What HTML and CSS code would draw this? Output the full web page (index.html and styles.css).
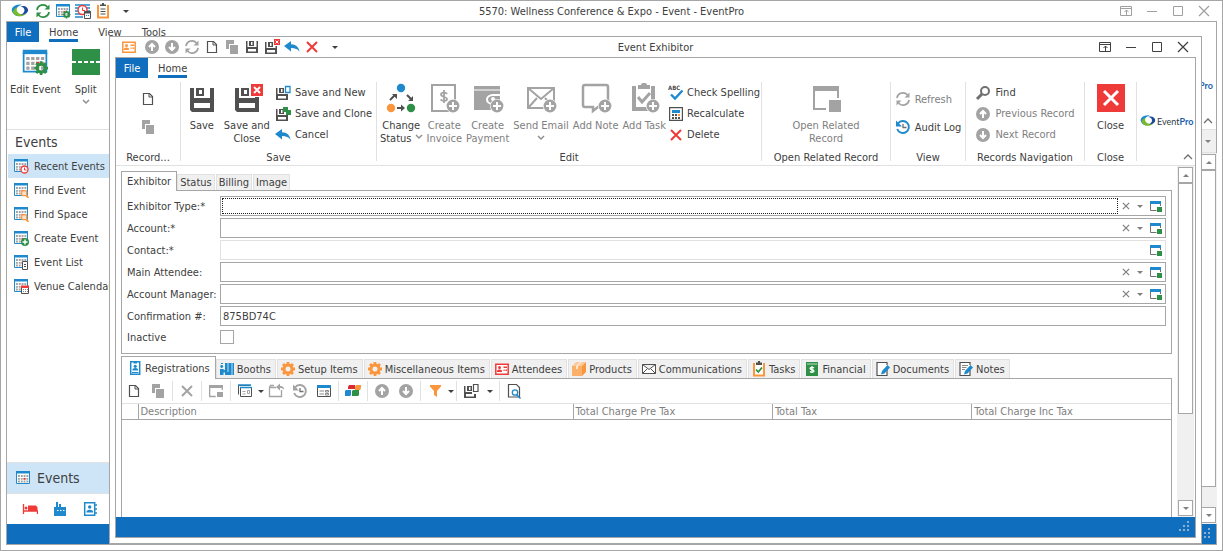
FILE: index.html
```html
<!DOCTYPE html>
<html lang="en">

<head>
    <meta charset="UTF-8">
    <meta name="viewport" content="width=device-width, initial-scale=1.0">
    <title>5570: Wellness Conference &amp; Expo - Event - EventPro</title>
    <link rel="stylesheet" href="styles.css">
</head>

<body>
    <!-- Icon sprite -->
    <svg class="sprite" aria-hidden="true">
        <symbol id="logo" viewBox="0 0 20 16">
            <path d="M12 1C5 0 0 4 1 8c1 4 5 6 9 6-4-1-6-4-5-7 1-3 4-5 7-6z" fill="#1e8acd" />
            <path d="M2 9c2 5 9 7 15 2-3 1-7 1-9-1-2-2-2-4-1-6C4 5 2 7 2 9z" fill="#7ab929" />
            <path d="M10 3c5-2 9 1 9 4s-4 6-8 5c3-1 4-3 4-5s-2-4-5-4z" fill="#1a4a9c" />
        </symbol>
        <symbol id="refresh" viewBox="0 0 16 16">
            <path d="M2 7a6 6 0 0 1 10.500-3M14 9a6 6 0 0 1-10.500 3" fill="none" stroke="currentColor" stroke-width="1.800" />
            <path d="M14.500 1.500v5H9.500zM1.500 14.500V9.500h5z" fill="currentColor" />
        </symbol>
        <symbol id="cal" viewBox="0 0 16 16">
            <path d="M1 1h14v13H1z" fill="#fff" />
            <path d="M1.500 2.500v11h13v-11" fill="none" stroke="#1e8acd" />
            <path d="M1 1h14v2.500H1z" fill="#1e8acd" />
            <path d="M3 6h10.500M3 8.800h10.500M3 11.500h10.500" stroke="#a3a3a3" stroke-width="1.800" stroke-dasharray="1.900 .9" />
            <path d="M8.600 7.900h1.900v1.800H8.600z" fill="#ee3b3a" />
        </symbol>
        <symbol id="gear" viewBox="0 0 16 16">
            <circle cx="8" cy="8" r="4" fill="none" stroke="currentColor" stroke-width="3" />
            <path d="M8 1v3M8 12v3M1 8h3M12 8h3M3 3l2 2M11 11l2 2M3 13l2-2M11 5l2-2" stroke="currentColor" stroke-width="2.800" />
        </symbol>
        <symbol id="cal-gear" viewBox="0 0 16 16">
            <use href="#cal" />
            <g color="#2e8f46"><use href="#gear" x="7" y="7" width="9" height="9" /></g>
        </symbol>
        <symbol id="cal-clock" viewBox="0 0 16 16">
            <use href="#cal" />
            <circle cx="11.500" cy="11.500" r="3.500" fill="#fff" stroke="#ee3b3a" stroke-width="1.300" />
            <path d="M11.500 9.500v2.500h2" fill="none" stroke="#ee3b3a" />
        </symbol>
        <symbol id="cal-find" viewBox="0 0 16 16">
            <use href="#cal" />
            <path d="M12.500 13l3 3" stroke="#fb963c" stroke-width="1.600" />
            <rect x="8.700" y="8.700" width="5" height="5" rx="1.500" fill="#fde0c4" stroke="#fb963c" stroke-width="1.200" />
        </symbol>
        <symbol id="cal-add" viewBox="0 0 16 16">
            <use href="#cal" />
            <circle cx="12" cy="12" r="4" fill="#2e8f46" />
            <path d="M12 9.500v5M9.500 12h5" stroke="#fff" stroke-width="1.400" />
        </symbol>
        <symbol id="cal-list" viewBox="0 0 16 16">
            <use href="#cal" />
            <path d="M9.500 7.500h5v8h-5z" fill="#fff" stroke="#505050" />
            <path d="M11 10.500h2M11 12.500h2" stroke="#505050" />
        </symbol>
        <symbol id="cal-venue" viewBox="0 0 16 16">
            <use href="#cal" />
            <path d="M8.500 8.500h7v7h-7z" fill="#fff" stroke="#505050" />
            <path d="M8 7.500h8v2.500H8z" fill="#ee3b3a" />
            <path d="M10 11.500h5M10 13.500h5" stroke="#888" stroke-dasharray="1 1" />
        </symbol>
        <symbol id="schedule" viewBox="0 0 16 16">
            <path d="M0 2h15M0 5h15M0 8h15M0 11h8M0 14h8" stroke="#1e8acd" stroke-width="1.600" />
            <circle cx="7.500" cy="7" r="4.500" fill="#fff" stroke="#ee3b3a" stroke-width="1.400" />
            <path d="M7.500 4.500V7.500H10" fill="none" stroke="#ee3b3a" />
            <path d="M9.500 8.500h6v7h-6z" fill="#fff" stroke="#505050" />
            <path d="M9 9.500h7" stroke="#505050" stroke-width="2" />
            <path d="M11 12.500h4" stroke="#1e8acd" stroke-dasharray="1 1" />
        </symbol>
        <symbol id="clipboard" viewBox="0 0 16 16">
            <path d="M3 2v12.500h10V2" fill="#fff" stroke="#fb963c" stroke-width="2" />
            <path d="M5 3V1.500h2V0h2v1.500h2V3z" fill="#505050" />
            <path d="M5.500 6h5M5.500 8.500h5M5.500 11h5" stroke="#505050" />
        </symbol>
        <symbol id="task" viewBox="0 0 16 16">
            <path d="M3 2v12.500h10V2" fill="#fff" stroke="#fb963c" stroke-width="2" />
            <path d="M5 4V1.500h2V0h2v1.500h2V4z" fill="#505050" />
            <path d="M5 8.500l2.300 2.500L11 6.500" fill="none" stroke="#2e8f46" stroke-width="1.800" />
        </symbol>
        <symbol id="card" viewBox="0 0 16 16">
            <path d="M1.800 3.300h12.400v9.900H1.800z" fill="#fff" stroke="currentColor" stroke-width="1.500" />
            <circle cx="5.500" cy="6.500" r="1.500" fill="currentColor" />
            <path d="M3 11V9.500q2.500-2 5 0V11zM9.500 5.500H13v1.500H9.500zM9.500 8.500h1.200V10H9.500zM11.500 8.500H13V10h-1.500z" fill="currentColor" />
        </symbol>
        <symbol id="up" viewBox="0 0 16 16">
            <circle cx="8" cy="8" r="7" fill="#a3a3a3" />
            <path d="M8 12V6M5 8l3-3 3 3" fill="none" stroke="#fff" stroke-width="2" />
        </symbol>
        <symbol id="down" viewBox="0 0 16 16">
            <circle cx="8" cy="8" r="7" fill="#a3a3a3" />
            <path d="M8 4v6M5 8l3 3 3-3" fill="none" stroke="#fff" stroke-width="2" />
        </symbol>
        <symbol id="doc" viewBox="0 0 16 16">
            <path d="M3.500 2.500h6l3 3v8h-9z" fill="#fff" stroke="#505050" stroke-width="1.200" />
            <path d="M9 3v3h3.500" fill="none" stroke="#505050" />
        </symbol>
        <symbol id="copy" viewBox="0 0 16 16">
            <path d="M2 1h8v4H5v5H2z" fill="#a3a3a3" />
            <path d="M6 6h8v9H6z" fill="#a3a3a3" />
        </symbol>
        <symbol id="floppy" viewBox="0 0 16 16">
            <path d="M2 2h1.500v6h9V2H14v12H2zM4 10v2.500h8V10z" fill="#505050" fill-rule="evenodd" />
            <path d="M5 2h5v5H5zM7 3v3h1.500V3z" fill="#505050" fill-rule="evenodd" />
        </symbol>
        <symbol id="floppy-lg" viewBox="0 0 32 32">
            <path d="M4 6h4v10h16V6h4v24H6l-2-2zM8 21v5h16v-5z" fill="#505050" fill-rule="evenodd" />
            <path d="M10 6h8v8h-8zM13 8v4h3V8z" fill="#505050" fill-rule="evenodd" />
        </symbol>
        <symbol id="redx" viewBox="0 0 10 10">
            <path d="M0 0h10v10H0z" fill="#ee3b3a" />
            <path d="M2.500 2.500l5 5M7.500 2.500l-5 5" stroke="#fff" stroke-width="1.600" />
        </symbol>
        <symbol id="floppy-x" viewBox="0 0 16 16">
            <use href="#floppy" x="-1" y="1" width="16" height="16" />
            <path d="M9 0h7v7H9z" fill="#fff" />
            <use href="#redx" x="10" y="0" width="6" height="6" />
        </symbol>
        <symbol id="floppy-new" viewBox="0 0 16 16">
            <use href="#floppy" x="-1" y="1" width="16" height="16" />
            <path d="M9 1h7v8H9z" fill="#fff" />
            <path d="M10.500 1.500h4.500v6h-4.500z" fill="#fff" stroke="#1e8acd" stroke-width="1.300" />
        </symbol>
        <symbol id="floppy-clone" viewBox="0 0 16 16">
            <use href="#floppy" x="-1" y="1" width="16" height="16" />
            <path d="M8 1h5v3h3v5h-5V6H8z" fill="#2e8f46" />
        </symbol>
        <symbol id="floppy-opt" viewBox="0 0 16 16">
            <use href="#floppy" x="-1" y="1" width="16" height="16" />
            <path d="M9 1h7v10H9z" fill="#fff" />
            <path d="M10.500 1.500h4.500v7h-4.500z" fill="#fff" stroke="#505050" stroke-width="1.200" />
        </symbol>
        <symbol id="undo" viewBox="0 0 16 16">
            <path d="M0 7l7-5v3.200c5 0 8 2.800 8.500 7.800C14 10 11 9 7 9v3.500z" fill="#1e8acd" />
        </symbol>
        <symbol id="x" viewBox="0 0 16 16">
            <path d="M3 3l10 10M13 3L3 13" stroke="currentColor" stroke-width="2" />
        </symbol>
        <symbol id="split" viewBox="0 0 32 32">
            <path d="M2 3h28v26H2z" fill="#2e8f46" />
            <path d="M2 16h28" stroke="#fff" stroke-width="2" stroke-dasharray="4 2" />
        </symbol>
        <symbol id="status" viewBox="0 0 32 32">
            <circle cx="16" cy="6" r="4.200" fill="#1e8acd" />
            <circle cx="6" cy="26" r="4.200" fill="#fb963c" />
            <circle cx="26" cy="26" r="4.200" fill="#2e8f46" />
            <path d="M5 18l5-5M12 26h6M22 13l5 5" stroke="#505050" stroke-width="2" />
            <path d="M7 12h5v5zM16 22.500l4 3.500-4 3.500zM28 14v5h-5z" fill="#505050" />
        </symbol>
        <symbol id="plus" viewBox="0 0 14 14">
            <circle cx="7" cy="7" r="7" fill="#fff" />
            <circle cx="7" cy="7" r="6.400" fill="#a3a3a3" />
            <path d="M7 3v8M3 7h8" stroke="#fff" stroke-width="2" />
        </symbol>
        <symbol id="invoice" viewBox="0 0 32 32">
            <path d="M4 3h23v26H4z" fill="#fff" stroke="#a3a3a3" stroke-width="2" />
            <path d="M19 12c-1-2-6-2-6 .5s6 2 6 4.500-5 2.500-6.500.5M16 8v13" fill="none" stroke="#a3a3a3" stroke-width="1.800" />
            <use href="#plus" x="18" y="17" width="14" height="14" />
        </symbol>
        <symbol id="wallet" viewBox="0 0 32 32">
            <path d="M2 4h26v24H2z" fill="#a3a3a3" />
            <path d="M28 8H2" stroke="#fff" />
            <path d="M29 13h-8c-8 0-8 9 0 9h8z" fill="#a3a3a3" stroke="#fff" stroke-width="2" />
            <circle cx="21" cy="17" r="2" fill="#fff" />
            <use href="#plus" x="18" y="17" width="14" height="14" />
        </symbol>
        <symbol id="mail-add" viewBox="0 0 32 32">
            <path d="M3 6h26v20H3zl13 11L29 6M3 26l9-10M29 26l-9-10" fill="none" stroke="#a3a3a3" stroke-width="2" />
            <use href="#plus" x="18" y="17" width="14" height="14" />
        </symbol>
        <symbol id="note-add" viewBox="0 0 32 32">
            <path d="M6 3h20q2 0 2 2v18q0 2-2 2h-8l-5 4v-4H5q-2 0-2-2V5q0-2 2-2z" fill="#fff" stroke="#a3a3a3" stroke-width="2.500" />
            <use href="#plus" x="18" y="17" width="14" height="14" />
        </symbol>
        <symbol id="task-add" viewBox="0 0 32 32">
            <path d="M6 4v23h19V4" fill="none" stroke="#a3a3a3" stroke-width="4" />
            <path d="M10 7V3h3q0-2 2-2h2q2 0 2 2h3v4z" fill="#a3a3a3" />
            <path d="M10 15l4 5 8-9" fill="none" stroke="#a3a3a3" stroke-width="3" />
            <use href="#plus" x="18" y="17" width="14" height="14" />
        </symbol>
        <symbol id="calc" viewBox="0 0 16 16">
            <path d="M1.600 1.600h12.800v12.800H1.600z" fill="#fff" stroke="#505050" stroke-width="1.200" />
            <path d="M4 4h8v3H4z" fill="#1e8acd" />
            <path d="M4 9h8M4 12h8" stroke="#505050" stroke-width="2" stroke-dasharray="2 1" />
            <path d="M10 8h2v2h-2z" fill="#fb963c" />
        </symbol>
        <symbol id="related" viewBox="0 0 32 32">
            <path d="M3 4h26v5H3z" fill="#a3a3a3" />
            <path d="M4 8v19h12M28 8v8" fill="none" stroke="#a3a3a3" stroke-width="2" />
            <path d="M19 18h12v12H19z" fill="#a3a3a3" />
        </symbol>
        <symbol id="open" viewBox="0 0 16 16">
            <path d="M2.500 5v7.500h6M12.500 5v3" fill="none" stroke="#707070" />
            <path d="M2 3h11v3H2z" fill="#1e8acd" />
            <path d="M9 9h5v5H9z" fill="#2e8f46" />
        </symbol>
        <symbol id="history" viewBox="0 0 16 16">
            <path d="M3 4.500a6 6 0 1 1-.8 5.500" fill="none" stroke="currentColor" stroke-width="1.900" />
            <path d="M1 1.500v6h6z" fill="currentColor" />
            <path d="M8 5v3.500h3.500" fill="none" stroke="#707070" stroke-width="1.300" />
        </symbol>
        <symbol id="find" viewBox="0 0 16 16">
            <circle cx="10" cy="6" r="4" fill="#fff" stroke="#707070" stroke-width="2" />
            <path d="M7 9l-5 5" stroke="#707070" stroke-width="3" />
        </symbol>
        <symbol id="close-lg" viewBox="0 0 32 32">
            <path d="M2 2h28v28H2z" fill="#ee3b3a" />
            <path d="M9 9l14 14M23 9L9 23" stroke="#fff" stroke-width="3" />
        </symbol>
        <symbol id="badge" viewBox="0 0 16 16">
            <path d="M3.700 1.700h9v12.600h-9z" fill="#fff" stroke="#1e8acd" stroke-width="1.500" />
            <path d="M6.500 2h3.500v1.500H6.500zM5 12h6.500v1H5zM5.500 10.500V9q2.800-1.800 5.500 0v1.500z" fill="#1e8acd" />
            <circle cx="8.200" cy="6.300" r="1.600" fill="#1e8acd" />
        </symbol>
        <symbol id="booth" viewBox="0 0 16 16">
            <path d="M6 2h9v12H6z" fill="#1e8acd" />
            <path d="M9 2v9M13 2v12" stroke="#fff" stroke-width=".7" />
            <circle cx="2.700" cy="5.500" r="1.400" fill="#1e8acd" />
            <path d="M1 8h3l3 2v1.500H4.500V14H1z" fill="#1e8acd" />
            <path d="M2 2.500h2" stroke="#1e8acd" />
        </symbol>
        <symbol id="box" viewBox="0 0 16 16">
            <path d="M1 5h10v10H1z" fill="#fbb06a" />
            <path d="M1 5l4-4h10l-4 4z" fill="#fcc999" />
            <path d="M11 5l4-4v10l-4 4z" fill="#fb963c" />
            <path d="M5 5l4-4h2L7 5v3H5z" fill="#fde6d0" />
        </symbol>
        <symbol id="mail" viewBox="0 0 16 16">
            <path d="M1.500 3.500h13v9h-13zl6.500 5 6.500-5M1.500 12.500L6 8M14.500 12.500L10 8" fill="#fff" stroke="#505050" />
        </symbol>
        <symbol id="money" viewBox="0 0 16 16">
            <path d="M2 1h12v14H2z" fill="#2e8f46" />
            <path d="M3 3h10.500" stroke="#fff" stroke-width=".7" />
            <path d="M10 7c-1-1-4-1-4 .5s4 1 4 2.500-3 1.500-4 .5M8 5v7" fill="none" stroke="#fff" stroke-width="1.300" />
        </symbol>
        <symbol id="edit-doc" viewBox="0 0 16 16">
            <path d="M12 8v6.500H2v-13h10V4" fill="#fff" stroke="#505050" stroke-width="1.200" />
            <path d="M6 13.500l1-3.500 5.500-6L15 6.500 9.500 12.500z" fill="#1e8acd" />
        </symbol>
        <symbol id="note" viewBox="0 0 16 16">
            <use href="#edit-doc" />
            <path d="M4 4.500h6M4 6.500h4.500M4 8.500h3" stroke="#888" />
        </symbol>
        <symbol id="grid-open" viewBox="0 0 16 16">
            <path d="M1 2h14v3H1z" fill="#a3a3a3" />
            <path d="M1.700 4v9.500h6M14.300 4v3" fill="none" stroke="#a3a3a3" stroke-width="1.300" />
            <path d="M9 9h6v5H9z" fill="#a3a3a3" />
        </symbol>
        <symbol id="form" viewBox="0 0 16 16">
            <path d="M1.500 11.500V2.500h12" fill="none" stroke="#505050" />
            <path d="M3.500 4.500h11v9h-11z" fill="#fff" stroke="#505050" />
            <path d="M1 2h13M3 4.500h12" stroke="#1e8acd" stroke-width="1.500" />
            <path d="M5.500 8.500h3M5.500 11h3M10.500 7.500h2v3h-2z" fill="none" stroke="#a3a3a3" />
        </symbol>
        <symbol id="import" viewBox="0 0 16 16">
            <path d="M8 4.500H1.500v9h12V7M1.500 4.500l1-2H6" fill="none" stroke="#a3a3a3" stroke-width="1.300" />
            <path d="M8 4l4-3.500V3c3 0 4 1.500 4 4-1-1.500-2-2-4-2v2.500z" fill="#a3a3a3" />
        </symbol>
        <symbol id="layout" viewBox="0 0 16 16">
            <path d="M1.500 2.500h13v11h-13z" fill="#fff" stroke="#505050" />
            <path d="M1 2h14v3H1z" fill="#1e8acd" />
            <path d="M3.500 8H8M3.500 11H8M9.500 7.500H12.500v1.500H9.500zM9.500 10.500h3V12h-3z" fill="none" stroke="#888" />
        </symbol>
        <symbol id="cubes" viewBox="0 0 16 16">
            <path d="M3 4l1-2h6v4H3z" fill="#d92b32" />
            <path d="M10 4l1-2h5v3l-1 2h-5z" fill="#fb963c" />
            <path d="M0 8l1-1h5v5l-1 1H0z" fill="#1e8acd" />
            <path d="M7 8l1-1h6v5l-1 1H7z" fill="#2e8f46" />
        </symbol>
        <symbol id="funnel" viewBox="0 0 16 16">
            <path d="M3 2h11v1.500L10 8v6l-3-2V8L3 3.500z" fill="#fb963c" />
        </symbol>
        <symbol id="preview" viewBox="0 0 16 16">
            <path d="M2.500 1.500h8l3 3v9.500h-11z" fill="#fff" stroke="#505050" stroke-width="1.200" />
            <path d="M10.500 11.500l4 4" stroke="#1e8acd" stroke-width="1.500" />
            <circle cx="9" cy="9.500" r="2.700" fill="#fff" stroke="#1e8acd" stroke-width="1.300" />
        </symbol>
        <symbol id="bed" viewBox="0 0 16 16">
            <path d="M1.500 3v10M1 10h14.500v3" fill="none" stroke="#ee3b3a" stroke-width="1.300" />
            <path d="M6 4.500h8l1.500 2V10H6z" fill="#ee3b3a" />
            <circle cx="4" cy="7" r="1.500" fill="#ee3b3a" />
        </symbol>
        <symbol id="factory" viewBox="0 0 16 16">
            <path d="M2 6h2V1h2v5h1V3h2v3h5v9H2z" fill="#1e8acd" />
            <path d="M5 9.500h8" stroke="#fff" stroke-dasharray="1.500 1.500" />
        </symbol>
        <symbol id="contacts" viewBox="0 0 16 16">
            <path d="M2.700 1.700h10v12.600h-10z" fill="#fff" stroke="#1e8acd" stroke-width="1.500" />
            <path d="M14 3v2M14 7v2M14 11v2" stroke="#1e8acd" stroke-width="1.500" />
            <circle cx="7.700" cy="6" r="1.700" fill="#1e8acd" />
            <path d="M4.500 11.500V10q3.200-2.500 6.500 0v1.500z" fill="#1e8acd" />
        </symbol>
        <symbol id="win-pin" viewBox="0 0 16 16">
            <path d="M2.500 3.500h11v9h-11zM2 5.500h12M8.500 12V7M6.500 9l2-2 2 2" fill="none" stroke="currentColor" />
        </symbol>
        <symbol id="win-min" viewBox="0 0 16 16">
            <path d="M3 8.500h10" stroke="currentColor" />
        </symbol>
        <symbol id="win-max" viewBox="0 0 16 16">
            <path d="M3.500 3.500h9v9h-9z" fill="none" stroke="currentColor" />
        </symbol>
        <symbol id="win-close" viewBox="0 0 16 16">
            <path d="M3 3l10 10M13 3L3 13" stroke="currentColor" stroke-width="1.300" />
        </symbol>
        <symbol id="chevron-down" viewBox="0 0 8 6">
            <path d="M1 1l3 3 3-3" fill="none" stroke="#909090" stroke-width="1.500" />
        </symbol>
        <symbol id="chevron-up" viewBox="0 0 10 6">
            <path d="M1 5l4-4 4 4" fill="none" stroke="#707070" stroke-width="1.300" />
        </symbol>
        <symbol id="grip" viewBox="0 0 12 12">
            <path d="M8 1h2M8 5h2M4 5h2M0 9h2M4 9h2M8 9h2" stroke="#8fb0cc" stroke-width="2" />
        </symbol>
    </svg>

    <div class="window">
        <header class="titlebar titlebar-main">
            <div class="quick">
                <svg class="logo-mark"><use href="#logo" /></svg>
                <button class="quick-btn green" aria-label="Refresh"><svg><use href="#refresh" /></svg></button>
                <button class="quick-btn" aria-label="Edit event"><svg><use href="#cal-gear" /></svg></button>
                <button class="quick-btn" aria-label="Schedule"><svg><use href="#schedule" /></svg></button>
                <button class="quick-btn" aria-label="Tasks"><svg><use href="#clipboard" /></svg></button>
                <button class="quick-btn last" aria-label="More"><span class="caret"></span></button>
            </div>
            <h1 class="title">5570: Wellness Conference &amp; Expo - Event - EventPro</h1>
            <div class="win-controls">
                <button aria-label="Display options"><svg><use href="#win-pin" /></svg></button>
                <button aria-label="Minimize"><svg><use href="#win-min" /></svg></button>
                <button aria-label="Maximize"><svg><use href="#win-max" /></svg></button>
                <button aria-label="Close window"><svg><use href="#win-close" /></svg></button>
            </div>
        </header>

        <div class="frame">
            <nav class="ribbon-tabs">
                <button class="file-tab">File</button>
                <button class="ribbon-tab active">Home</button>
                <button class="ribbon-tab">View</button>
                <button class="ribbon-tab">Tools</button>
            </nav>
            <div class="ribbon ribbon-main">
                <div class="ribbon-row">
                    <button class="big"><svg class="icon-28"><use href="#cal-gear" /></svg><span>Edit Event</span></button>
                    <button class="big"><svg><use href="#split" /></svg><span>Split</span><svg class="chev"><use href="#chevron-down" /></svg></button>
                </div>
                <div class="ribbon-end">
                    <span class="brand-name">t<b>Pro</b></span>
                    <svg class="chev-up"><use href="#chevron-up" /></svg>
                </div>
            </div>
            <div class="workspace">
                <aside class="sidebar">
                    <h2 class="sidebar-title">Events</h2>
                    <ul class="nav-list">
                        <li><a class="nav-item selected" href="#"><svg><use href="#cal-clock" /></svg>Recent Events</a></li>
                        <li><a class="nav-item" href="#"><svg><use href="#cal-find" /></svg>Find Event</a></li>
                        <li><a class="nav-item" href="#"><svg><use href="#cal-find" /></svg>Find Space</a></li>
                        <li><a class="nav-item" href="#"><svg><use href="#cal-add" /></svg>Create Event</a></li>
                        <li><a class="nav-item" href="#"><svg><use href="#cal-list" /></svg>Event List</a></li>
                        <li><a class="nav-item" href="#"><svg><use href="#cal-venue" /></svg>Venue Calendar</a></li>
                    </ul>
                    <button class="nav-group"><svg><use href="#cal" /></svg>Events</button>
                    <div class="nav-icons">
                        <button aria-label="Rooms"><svg><use href="#bed" /></svg></button>
                        <button aria-label="Venues"><svg><use href="#factory" /></svg></button>
                        <button aria-label="Contacts"><svg><use href="#contacts" /></svg></button>
                    </div>
                </aside>
                <div class="side-scroll">
                    <button class="side-drop" aria-label="Expand"><span class="caret grey"></span></button>
                    <div class="scrollbar">
                        <button class="scroll-btn" aria-label="Scroll up"><span class="caret grey flip"></span></button>
                        <div class="thumb"></div>
                        <div class="track"></div>
                        <button class="scroll-btn" aria-label="Scroll down"><span class="caret grey"></span></button>
                    </div>
                </div>
            </div>
            <footer class="statusbar"><svg class="grip"><use href="#grip" /></svg></footer>
        </div>
    </div>

    <!-- Event Exhibitor window -->
    <div class="window dialog">
        <header class="titlebar">
            <div class="quick">
                <button class="quick-btn orange first" aria-label="Exhibitor"><svg><use href="#card" /></svg></button>
                <button class="quick-btn" aria-label="Previous Record"><svg><use href="#up" /></svg></button>
                <button class="quick-btn" aria-label="Next Record"><svg><use href="#down" /></svg></button>
                <button class="quick-btn muted" aria-label="Refresh"><svg><use href="#refresh" /></svg></button>
                <button class="quick-btn" aria-label="New"><svg><use href="#doc" /></svg></button>
                <button class="quick-btn" aria-label="Clone"><svg><use href="#copy" /></svg></button>
                <button class="quick-btn" aria-label="Save"><svg><use href="#floppy" /></svg></button>
                <button class="quick-btn" aria-label="Save and Close"><svg><use href="#floppy-x" /></svg></button>
                <button class="quick-btn" aria-label="Cancel"><svg><use href="#undo" /></svg></button>
                <button class="quick-btn red" aria-label="Delete"><svg><use href="#x" /></svg></button>
                <button class="quick-btn last" aria-label="More"><span class="caret"></span></button>
            </div>
            <h1 class="title">Event Exhibitor</h1>
            <div class="win-controls">
                <button aria-label="Display options"><svg><use href="#win-pin" /></svg></button>
                <button aria-label="Minimize"><svg><use href="#win-min" /></svg></button>
                <button aria-label="Maximize"><svg><use href="#win-max" /></svg></button>
                <button aria-label="Close window"><svg><use href="#win-close" /></svg></button>
            </div>
        </header>

        <div class="frame">
            <nav class="ribbon-tabs">
                <button class="file-tab">File</button>
                <button class="ribbon-tab active">Home</button>
            </nav>

            <div class="ribbon">
                <section class="group g-record">
                    <div class="group-body">
                        <div class="small-col wide-rows">
                            <button class="small" aria-label="New record"><svg><use href="#doc" /></svg></button>
                            <button class="small" aria-label="Clone record"><svg><use href="#copy" /></svg></button>
                        </div>
                    </div>
                    <h3>Record...</h3>
                </section>
                <section class="group g-save">
                    <div class="group-body">
                        <button class="big"><svg><use href="#floppy-lg" /></svg><span>Save</span></button>
                        <button class="big"><svg viewBox="0 0 32 32"><use href="#floppy-lg" width="32" height="32" /><path d="M19 1h13v14H19z" fill="#fff" /><use href="#redx" x="20" y="2" width="12" height="12" /></svg><span>Save and<br>Close</span></button>
                        <div class="small-col">
                            <button class="small"><svg><use href="#floppy-new" /></svg>Save and New</button>
                            <button class="small"><svg><use href="#floppy-clone" /></svg>Save and Clone</button>
                            <button class="small"><svg><use href="#undo" /></svg>Cancel</button>
                        </div>
                    </div>
                    <h3>Save</h3>
                </section>
                <section class="group g-edit">
                    <div class="group-body">
                        <button class="big"><svg><use href="#status" /></svg><span>Change<br>Status <svg class="chev"><use href="#chevron-down" /></svg></span></button>
                        <button class="big" disabled><svg><use href="#invoice" /></svg><span>Create<br>Invoice</span></button>
                        <button class="big" disabled><svg><use href="#wallet" /></svg><span>Create<br>Payment</span></button>
                        <button class="big" disabled><svg><use href="#mail-add" /></svg><span>Send Email</span><svg class="chev"><use href="#chevron-down" /></svg></button>
                        <button class="big" disabled><svg><use href="#note-add" /></svg><span>Add Note</span></button>
                        <button class="big" disabled><svg><use href="#task-add" /></svg><span>Add Task</span></button>
                        <div class="small-col">
                            <button class="small"><svg viewBox="0 0 16 16"><text x="0" y="5" class="icon-abc">ABC</text><path d="M3 9.500l4 4L14.500 5.500" fill="none" stroke="#1e8acd" stroke-width="2.400" /></svg>Check Spelling</button>
                            <button class="small"><svg><use href="#calc" /></svg>Recalculate</button>
                            <button class="small"><svg class="red"><use href="#x" /></svg>Delete</button>
                        </div>
                    </div>
                    <h3>Edit</h3>
                </section>
                <section class="group g-related">
                    <div class="group-body">
                        <button class="big" disabled><svg><use href="#related" /></svg><span>Open Related<br>Record</span></button>
                    </div>
                    <h3>Open Related Record</h3>
                </section>
                <section class="group g-view">
                    <div class="group-body">
                        <div class="small-col wide-rows">
                            <button class="small" disabled><svg class="muted"><use href="#refresh" /></svg>Refresh</button>
                            <button class="small"><svg class="blue"><use href="#history" /></svg>Audit Log</button>
                        </div>
                    </div>
                    <h3>View</h3>
                </section>
                <section class="group g-nav">
                    <div class="group-body">
                        <div class="small-col">
                            <button class="small"><svg><use href="#find" /></svg>Find</button>
                            <button class="small" disabled><svg><use href="#up" /></svg>Previous Record</button>
                            <button class="small" disabled><svg><use href="#down" /></svg>Next Record</button>
                        </div>
                    </div>
                    <h3>Records Navigation</h3>
                </section>
                <section class="group g-close">
                    <div class="group-body">
                        <button class="big"><svg><use href="#close-lg" /></svg><span>Close</span></button>
                    </div>
                    <h3>Close</h3>
                </section>
                <div class="brand">
                    <div class="brand-row"><svg><use href="#logo" /></svg><span class="brand-name">Event<b>Pro</b></span></div>
                    <svg class="chev-up"><use href="#chevron-up" /></svg>
                </div>
            </div>

            <div class="content">
                <main class="form-area">
                    <div class="tabs">
                        <button class="tab active">Exhibitor</button>
                        <button class="tab">Status</button>
                        <button class="tab">Billing</button>
                        <button class="tab">Image</button>
                    </div>
                    <form class="panel fields">
                        <label for="type">Exhibitor Type:*</label>
                        <div class="field focused">
                            <input id="type" type="text">
                            <button type="button" class="clear" aria-label="Clear"><svg><use href="#x" /></svg></button>
                            <button type="button" class="drop" aria-label="Open list"><span class="caret grey"></span></button>
                            <button type="button" class="open" aria-label="Open record"><svg><use href="#open" /></svg></button>
                        </div>
                        <label for="account">Account:*</label>
                        <div class="field">
                            <input id="account" type="text">
                            <button type="button" class="clear" aria-label="Clear"><svg><use href="#x" /></svg></button>
                            <button type="button" class="drop" aria-label="Open list"><span class="caret grey"></span></button>
                            <button type="button" class="open" aria-label="Open record"><svg><use href="#open" /></svg></button>
                        </div>
                        <label for="contact">Contact:*</label>
                        <div class="field off">
                            <input id="contact" type="text" disabled>
                            <button type="button" class="open" aria-label="Open record"><svg><use href="#open" /></svg></button>
                        </div>
                        <label for="attendee">Main Attendee:</label>
                        <div class="field">
                            <input id="attendee" type="text">
                            <button type="button" class="clear" aria-label="Clear"><svg><use href="#x" /></svg></button>
                            <button type="button" class="drop" aria-label="Open list"><span class="caret grey"></span></button>
                            <button type="button" class="open" aria-label="Open record"><svg><use href="#open" /></svg></button>
                        </div>
                        <label for="manager">Account Manager:</label>
                        <div class="field">
                            <input id="manager" type="text">
                            <button type="button" class="clear" aria-label="Clear"><svg><use href="#x" /></svg></button>
                            <button type="button" class="drop" aria-label="Open list"><span class="caret grey"></span></button>
                            <button type="button" class="open" aria-label="Open record"><svg><use href="#open" /></svg></button>
                        </div>
                        <label for="confirmation">Confirmation #:</label>
                        <div class="field">
                            <input id="confirmation" type="text" value="875BD74C">
                        </div>
                        <label for="inactive">Inactive</label>
                        <input id="inactive" class="check" type="checkbox">
                    </form>

                    <div class="tabs icon-tabs">
                        <button class="tab active"><svg><use href="#badge" /></svg>Registrations</button>
                        <button class="tab"><svg><use href="#booth" /></svg>Booths</button>
                        <button class="tab"><svg class="orange"><use href="#gear" /></svg>Setup Items</button>
                        <button class="tab"><svg class="orange"><use href="#gear" /></svg>Miscellaneous Items</button>
                        <button class="tab"><svg class="red"><use href="#card" /></svg>Attendees</button>
                        <button class="tab"><svg><use href="#box" /></svg>Products</button>
                        <button class="tab"><svg><use href="#mail" /></svg>Communications</button>
                        <button class="tab"><svg><use href="#task" /></svg>Tasks</button>
                        <button class="tab"><svg><use href="#money" /></svg>Financial</button>
                        <button class="tab"><svg><use href="#edit-doc" /></svg>Documents</button>
                        <button class="tab"><svg><use href="#note" /></svg>Notes</button>
                    </div>
                    <div class="panel grid-panel">
                        <div class="toolbar">
                            <button aria-label="New"><svg><use href="#doc" /></svg></button>
                            <button aria-label="Clone"><svg><use href="#copy" /></svg></button>
                            <span class="sep"></span>
                            <button class="muted" aria-label="Delete"><svg><use href="#x" /></svg></button>
                            <span class="sep"></span>
                            <button aria-label="Open record"><svg><use href="#grid-open" /></svg></button>
                            <span class="sep"></span>
                            <button aria-label="Views"><svg><use href="#form" /></svg></button>
                            <button class="menu" aria-label="View list"><span class="caret"></span></button>
                            <button aria-label="Export"><svg><use href="#import" /></svg></button>
                            <button class="muted" aria-label="History"><svg><use href="#history" /></svg></button>
                            <button aria-label="Layout"><svg><use href="#layout" /></svg></button>
                            <span class="sep"></span>
                            <button aria-label="Categories"><svg><use href="#cubes" /></svg></button>
                            <span class="sep"></span>
                            <button aria-label="Move up"><svg><use href="#up" /></svg></button>
                            <button aria-label="Move down"><svg><use href="#down" /></svg></button>
                            <span class="sep"></span>
                            <button aria-label="Filter"><svg><use href="#funnel" /></svg></button>
                            <button class="menu" aria-label="Filter list"><span class="caret"></span></button>
                            <span class="sep"></span>
                            <button aria-label="Save layout"><svg><use href="#floppy-opt" /></svg></button>
                            <button class="menu wide" aria-label="Layout list"><span class="caret"></span></button>
                            <span class="sep"></span>
                            <button aria-label="Preview"><svg><use href="#preview" /></svg></button>
                        </div>
                        <table class="grid">
                            <thead>
                                <tr>
                                    <th class="handle"></th>
                                    <th>Description</th>
                                    <th class="amount">Total Charge Pre Tax</th>
                                    <th class="amount">Total Tax</th>
                                    <th class="amount">Total Charge Inc Tax</th>
                                </tr>
                            </thead>
                        </table>
                    </div>
                </main>
                <div class="scrollbar">
                    <button class="scroll-btn" aria-label="Scroll up"><span class="caret grey flip"></span></button>
                    <div class="thumb"></div>
                    <div class="track"></div>
                    <button class="scroll-btn" aria-label="Scroll down"><span class="caret grey"></span></button>
                </div>
            </div>
            <footer class="statusbar"><svg class="grip"><use href="#grip" /></svg></footer>
        </div>
    </div>
</body>

</html>
```

FILE: styles.css
```css
* {
    box-sizing: border-box;
}

body {
    margin: 0;
    height: 100vh;
    overflow: hidden;
    font-family: "DejaVu Sans Condensed", "DejaVu Sans", Tahoma, sans-serif;
    font-size: 11px;
    line-height: 13px;
    color: #404040;
    background: #fff;
}

h1, h2, h3, ul {
    margin: 0;
    padding: 0;
    font-size: 11px;
    font-weight: normal;
    list-style: none;
}

button, input {
    margin: 0;
    padding: 0;
    border: none;
    background: none;
    font: inherit;
    color: inherit;
}

button {
    display: flex;
    align-items: center;
    justify-content: center;
    white-space: nowrap;
    flex: none;
}

button:disabled {
    color: #808080;
}

svg {
    width: 16px;
    height: 16px;
    flex: none;
    display: block;
}

.sprite {
    position: absolute;
    width: 0;
    height: 0;
}

.icon-abc {
    font-size: 6px;
    font-weight: bold;
    fill: #505050;
}

.green { color: #2e8f46; }
.orange { color: #fb963c; }
.red { color: #ee3b3a; }
.blue { color: #1e8acd; }
.muted { color: #a3a3a3; }

.caret {
    border: 3px solid transparent;
    border-top-color: #404040;
    border-bottom: none;
}

.caret.grey {
    border-top-color: #808080;
}

.caret.flip {
    transform: rotate(180deg);
}

/* Windows */
.window {
    height: 100vh;
    display: flex;
    flex-direction: column;
    border: 1px solid #a6a6a6;
    padding: 0 5px 5px;
    background: #fff;
}

.dialog {
    position: absolute;
    top: 36px;
    right: 21px;
    bottom: 7px;
    left: 109px;
    height: auto;
}

.frame {
    flex: 1;
    min-height: 0;
    display: flex;
    flex-direction: column;
    border: 1px solid #a6a6a6;
}

.titlebar {
    display: grid;
    grid-template-columns: 1fr auto 1fr;
    align-items: center;
    height: 20px;
}

.quick {
    display: flex;
    align-items: center;
}

.quick-btn {
    width: 20px;
    height: 20px;
}

.quick-btn.first {
    margin-right: 3px;
    margin-left: 4px;
}

.quick-btn.last {
    margin-left: 3px;
}

.logo-mark {
    width: 18px;
    margin: 0 4px 0 5px;
}

.win-controls {
    display: flex;
    justify-content: flex-end;
}

.win-controls button {
    width: 26px;
    height: 20px;
}

.titlebar-main .win-controls {
    color: #a0a0a0;
}

/* Ribbon */
.ribbon-tabs {
    display: flex;
    height: 20px;
    flex: none;
}

.file-tab {
    width: 32px;
    color: #fff;
    background: #106ebe;
}

.ribbon-tab {
    margin: 0 10px;
    height: 20px;
    border-top: 3px solid transparent;
    border-bottom: 3px solid transparent;
}

.ribbon-tab.active {
    border-bottom-color: #106ebe;
}

.ribbon {
    display: flex;
    flex: none;
    height: 88px;
    padding-top: 4px;
    border-bottom: 1px solid #e1e1e1;
}

.ribbon-main {
    justify-content: space-between;
}

.ribbon-row {
    display: flex;
    gap: 5px;
    padding-left: 1px;
}

.ribbon-end {
    display: flex;
    flex-direction: column;
    align-items: flex-end;
    justify-content: space-between;
    padding: 33px 3px 5px;
}

.group {
    display: flex;
    flex-direction: column;
    flex: none;
    height: 79px;
    border-right: 1px solid #e1e1e1;
}

.group-body {
    display: flex;
    flex: none;
    justify-content: center;
    height: 69px;
}

.group h3 {
    text-align: center;
    white-space: nowrap;
}

.g-record { width: 65px; }
.g-save { width: 196px; }
.g-edit { width: 385px; }
.g-related { width: 129px; }
.g-view { width: 75px; }
.g-nav { width: 119px; }
.g-close { width: 52px; }

.big {
    flex-direction: column;
    justify-content: flex-start;
    padding: 0 2px;
}

.g-save .big {
    padding: 0 3px;
}

.big > svg {
    width: 32px;
    height: 32px;
    margin-bottom: 5px;
}

.big > .icon-28 {
    width: 28px;
    height: 28px;
    margin: 2px 2px 7px;
}

.big > .chev {
    width: 8px;
    height: 6px;
    margin: 3px 0 0;
}

.big span .chev {
    display: inline-block;
    width: 8px;
    height: 6px;
    vertical-align: 2px;
}

.small-col {
    display: flex;
    flex-direction: column;
}

.small {
    height: 21px;
    gap: 4px;
    padding: 0 2px;
    justify-content: flex-start;
}

.g-edit .small {
    gap: 3px;
    padding: 0;
}

.wide-rows {
    padding-top: 3px;
}

.wide-rows .small {
    height: 28px;
}

.brand {
    flex: 1;
    display: flex;
    flex-direction: column;
    align-items: flex-end;
    justify-content: space-between;
    padding: 31px 3px 5px;
}

.brand-row {
    display: flex;
    align-items: center;
    gap: 1px;
}

.brand-name {
    font-family: Lato, sans-serif;
    font-size: 9px;
    color: #303a44;
}

.brand-name b {
    color: #1a62ae;
}

.chev-up {
    width: 10px;
    height: 6px;
}

/* Sidebar */
.workspace {
    flex: 1;
    min-height: 0;
    display: flex;
    justify-content: space-between;
}

.sidebar {
    width: 140px;
    display: flex;
    flex-direction: column;
}

.sidebar-title {
    padding: 4px 8px 3px;
    font-size: 14px;
    line-height: 17px;
}

.nav-list {
    flex: 1;
    padding-left: 1px;
}

.nav-item {
    display: flex;
    align-items: center;
    gap: 5px;
    height: 24px;
    padding-left: 5px;
    color: inherit;
    text-decoration: none;
    white-space: nowrap;
}

.nav-item.selected,
.nav-group {
    background: #cde5f7;
}

.nav-group {
    height: 32px;
    justify-content: flex-start;
    gap: 6px;
    padding-left: 8px;
    border-top: 1px solid #e1e1e1;
    border-bottom: 1px solid #e1e1e1;
    font-size: 14px;
}

.nav-icons {
    display: flex;
    gap: 14px;
    height: 30px;
    padding-left: 15px;
}

.side-scroll {
    display: flex;
    flex-direction: column;
    width: 16px;
}

.side-drop {
    height: 23px;
    background: #f0f0f0;
    border-bottom: 1px solid #e1e1e1;
}

.scrollbar {
    flex: none;
    display: flex;
    flex-direction: column;
    width: 17px;
    padding: 1px;
    background: #f0f0f0;
}

.scroll-btn {
    height: 16px;
    border: 1px solid #a6a6a6;
    background: #fff;
}

.thumb {
    flex: 8;
    border: 1px solid #a6a6a6;
    background: #fff;
}

.track {
    flex: 3;
}

.side-scroll .scrollbar {
    flex: 1;
}

.side-scroll .thumb {
    flex: 48;
}

.statusbar {
    display: flex;
    justify-content: flex-end;
    align-items: center;
    flex: none;
    height: 20px;
    padding-right: 4px;
    background: #106ebe;
}

.grip {
    width: 12px;
    height: 12px;
}

/* Exhibitor form */
.content {
    flex: 1;
    min-height: 0;
    display: flex;
    gap: 5px;
    padding-right: 1px;
}

.form-area {
    flex: 1;
    min-width: 0;
    display: flex;
    flex-direction: column;
    padding: 5px 0 0 5px;
}

.tabs {
    display: flex;
    align-items: flex-end;
    height: 19px;
    flex: none;
}

.tab {
    height: 16px;
    padding: 0 2px;
    gap: 2px;
    border: 1px solid #e1e1e1;
    border-width: 1px 1px 0 1px;
    margin-right: 1px;
    background: #f0f0f0;
}

.tab.active {
    height: 20px;
    margin: 0 0 -1px;
    padding: 0 5px;
    border-color: #a6a6a6;
    background: #fff;
    position: relative;
}

.icon-tabs {
    height: 22px;
    margin-top: 2px;
}

.icon-tabs .tab {
    height: 19px;
    padding: 0 4px 0 2px;
}

.icon-tabs .tab.active {
    height: 23px;
    padding: 0 5px;
}

.panel {
    border: 1px solid #a6a6a6;
}

.fields {
    display: grid;
    grid-template-columns: 91px 1fr;
    gap: 2px;
    align-items: center;
    padding: 5px 5px 7px;
}

.fields label {
    white-space: nowrap;
}

.field {
    display: flex;
    align-items: center;
    height: 20px;
    border: 1px solid #a6a6a6;
}

.field input {
    flex: 1;
    min-width: 0;
    height: 16px;
    margin: 0 1px;
    padding: 0 1px;
    outline: none;
}

.field.focused input {
    border: 1px dotted #202020;
}

.field.off {
    border-color: #e1e1e1;
}

.field button {
    height: 18px;
}

.clear {
    width: 14px;
    color: #808080;
}

.clear svg {
    width: 10px;
    height: 10px;
}

.drop {
    width: 14px;
}

.open {
    width: 18px;
}

.check {
    appearance: none;
    width: 14px;
    height: 14px;
    margin: 2px 0;
    border: 1px solid #a6a6a6;
}

.grid-panel {
    flex: 1;
    border-bottom: none;
}

.toolbar {
    display: flex;
    align-items: center;
    height: 25px;
    border-bottom: 1px solid #e1e1e1;
}

.toolbar button {
    width: 24px;
    height: 24px;
}

.toolbar .menu {
    width: 7px;
}

.toolbar .menu.wide {
    width: 14px;
}

.sep {
    width: 1px;
    height: 20px;
    margin: 0 2px;
    background: #e1e1e1;
}

.grid {
    width: 100%;
    table-layout: fixed;
    border-collapse: collapse;
    border-bottom: 1px solid #a6a6a6;
}

.grid th {
    height: 15px;
    padding: 0 2px;
    font-weight: normal;
    text-align: left;
    color: #808080;
    border-left: 1px solid #a6a6a6;
}

.grid .handle {
    width: 16px;
    padding: 0;
    border-left: none;
}

.grid .amount {
    width: 19%;
}
```
